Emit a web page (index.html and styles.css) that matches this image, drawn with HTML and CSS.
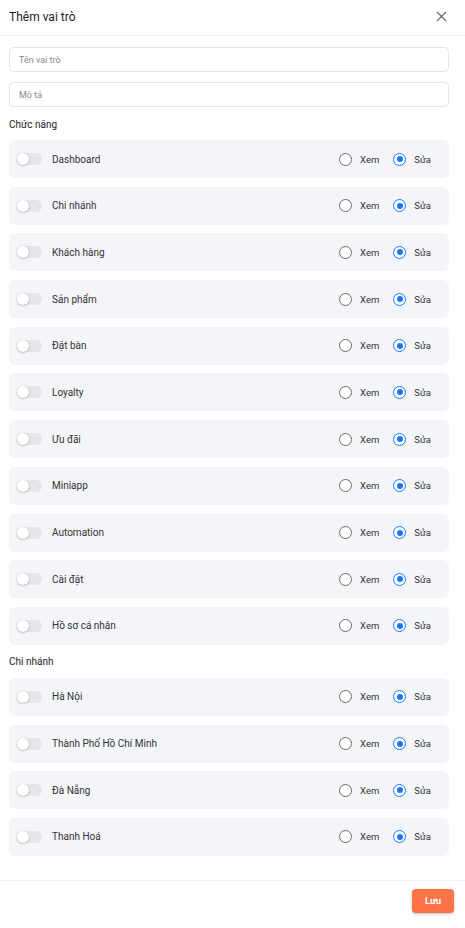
FILE: index.html
```html
<!DOCTYPE html>
<html lang="vi">
<head>
<meta charset="utf-8">
<title>Thêm vai trò</title>
<link rel="stylesheet" href="styles.css">
</head>
<body>
<div class="modal">
  <div class="header">
    <div class="title">Thêm vai trò</div>
    <svg class="close" width="11" height="11" viewBox="0 0 11 11"><path d="M1 1L10 10M10 1L1 10" stroke="#6b6b6b" stroke-width="1.2" fill="none"/></svg>
  </div>
  <div class="body">
    <input class="field" type="text" placeholder="Tên vai trò">
    <input class="field" type="text" placeholder="Mô tả">
    <div class="section">Chức năng</div>
    <div class="list">
      <div class="row"><span class="toggle"><span class="knob"></span></span><span class="name">Dashboard</span><span class="opts"><span class="radio"></span><span class="opt">Xem</span><span class="radio on"></span><span class="opt">Sửa</span></span></div>
      <div class="row"><span class="toggle"><span class="knob"></span></span><span class="name">Chi nhánh</span><span class="opts"><span class="radio"></span><span class="opt">Xem</span><span class="radio on"></span><span class="opt">Sửa</span></span></div>
      <div class="row"><span class="toggle"><span class="knob"></span></span><span class="name">Khách hàng</span><span class="opts"><span class="radio"></span><span class="opt">Xem</span><span class="radio on"></span><span class="opt">Sửa</span></span></div>
      <div class="row"><span class="toggle"><span class="knob"></span></span><span class="name">Sản phẩm</span><span class="opts"><span class="radio"></span><span class="opt">Xem</span><span class="radio on"></span><span class="opt">Sửa</span></span></div>
      <div class="row"><span class="toggle"><span class="knob"></span></span><span class="name">Đặt bàn</span><span class="opts"><span class="radio"></span><span class="opt">Xem</span><span class="radio on"></span><span class="opt">Sửa</span></span></div>
      <div class="row"><span class="toggle"><span class="knob"></span></span><span class="name">Loyalty</span><span class="opts"><span class="radio"></span><span class="opt">Xem</span><span class="radio on"></span><span class="opt">Sửa</span></span></div>
      <div class="row"><span class="toggle"><span class="knob"></span></span><span class="name">Ưu đãi</span><span class="opts"><span class="radio"></span><span class="opt">Xem</span><span class="radio on"></span><span class="opt">Sửa</span></span></div>
      <div class="row"><span class="toggle"><span class="knob"></span></span><span class="name">Miniapp</span><span class="opts"><span class="radio"></span><span class="opt">Xem</span><span class="radio on"></span><span class="opt">Sửa</span></span></div>
      <div class="row"><span class="toggle"><span class="knob"></span></span><span class="name">Automation</span><span class="opts"><span class="radio"></span><span class="opt">Xem</span><span class="radio on"></span><span class="opt">Sửa</span></span></div>
      <div class="row"><span class="toggle"><span class="knob"></span></span><span class="name">Cài đặt</span><span class="opts"><span class="radio"></span><span class="opt">Xem</span><span class="radio on"></span><span class="opt">Sửa</span></span></div>
      <div class="row"><span class="toggle"><span class="knob"></span></span><span class="name">Hồ sơ cá nhân</span><span class="opts"><span class="radio"></span><span class="opt">Xem</span><span class="radio on"></span><span class="opt">Sửa</span></span></div>
    </div>
    <div class="section second">Chi nhánh</div>
    <div class="list">
      <div class="row"><span class="toggle"><span class="knob"></span></span><span class="name">Hà Nội</span><span class="opts"><span class="radio"></span><span class="opt">Xem</span><span class="radio on"></span><span class="opt">Sửa</span></span></div>
      <div class="row"><span class="toggle"><span class="knob"></span></span><span class="name">Thành Phố Hồ Chí Minh</span><span class="opts"><span class="radio"></span><span class="opt">Xem</span><span class="radio on"></span><span class="opt">Sửa</span></span></div>
      <div class="row"><span class="toggle"><span class="knob"></span></span><span class="name">Đà Nẵng</span><span class="opts"><span class="radio"></span><span class="opt">Xem</span><span class="radio on"></span><span class="opt">Sửa</span></span></div>
      <div class="row"><span class="toggle"><span class="knob"></span></span><span class="name">Thanh Hoá</span><span class="opts"><span class="radio"></span><span class="opt">Xem</span><span class="radio on"></span><span class="opt">Sửa</span></span></div>
    </div>
  </div>
  <div class="footer">
    <button class="save">Lưu</button>
  </div>
</div>
</body>
</html>
```

FILE: styles.css
```css
* { box-sizing: border-box; }
html, body { margin: 0; padding: 0; background: #fff; }
body {
  font-family: Roboto, "Noto Sans", sans-serif;
  color: #2b2b2b;
  width: 465px;
}
.modal { display: flex; flex-direction: column; }
.header {
  height: 36px;
  display: flex;
  align-items: center;
  justify-content: space-between;
  padding: 0 18px 2px 9px;
  border-bottom: 1px solid #f0f0f0;
}
.title { font-size: 12px; color: #222; }
.close { display: block; }
.body { padding: 11px 16px 24px 9px; display: flex; flex-direction: column; }
.field {
  display: block;
  width: 440px;
  height: 25px;
  border: 1px solid #e6e6ea;
  border-radius: 4px;
  padding: 0 9px;
  font-family: inherit;
  font-size: 9px;
  color: #333;
  outline: none;
  margin: 0 0 10px 0;
}
.field::placeholder { color: #8a8a8a; }
.section { font-size: 10px; color: #222; margin: 1px 0 8px 0; line-height: 14px; }
.section.second { margin: 10px 0 9px 0; }
.list { display: flex; flex-direction: column; gap: 8.7px; width: 440px; }
.row {
  height: 38px;
  background: #f4f5f9;
  border-radius: 6px;
  display: flex;
  align-items: center;
  padding: 0 18px 0 8px;
}
.toggle {
  width: 25px;
  height: 12px;
  border-radius: 6px;
  background: #e6e6e8;
  position: relative;
  flex: none;
}
.knob {
  position: absolute;
  left: 0;
  top: 0;
  width: 12px;
  height: 12px;
  border-radius: 50%;
  background: #fff;
  box-shadow: 0 0.5px 2px rgba(0,0,0,0.35);
}
.name { font-size: 10px; color: #333; margin-left: 10px; flex: 1; }
.opts { display: flex; align-items: center; }
.radio {
  width: 13px;
  height: 13px;
  border-radius: 50%;
  border: 1.3px solid #6a6a6a;
  background: #fff;
  position: relative;
  flex: none;
}
.radio.on { border-color: #1677ff; }
.radio.on::after {
  content: "";
  position: absolute;
  left: 50%;
  top: 50%;
  width: 6px;
  height: 6px;
  margin: -3px 0 0 -3px;
  border-radius: 50%;
  background: #1677ff;
}
.opt { font-size: 9.5px; color: #333; margin-left: 8px; }
.opt:nth-child(2) { margin-right: 14px; }
.footer {
  border-top: 1px solid #f0f0f0;
  height: 48px;
  display: flex;
  justify-content: flex-end;
  align-items: flex-start;
  padding: 8px 11px 0 0;
}
.save {
  width: 42px;
  height: 24px;
  border: none;
  border-radius: 4px;
  background: #ff7349;
  color: #fff;
  font-family: inherit;
  font-size: 9.5px;
  font-weight: 700;
  box-shadow: 0 1px 3px rgba(0,0,0,0.25);
  padding: 0;
}
```
